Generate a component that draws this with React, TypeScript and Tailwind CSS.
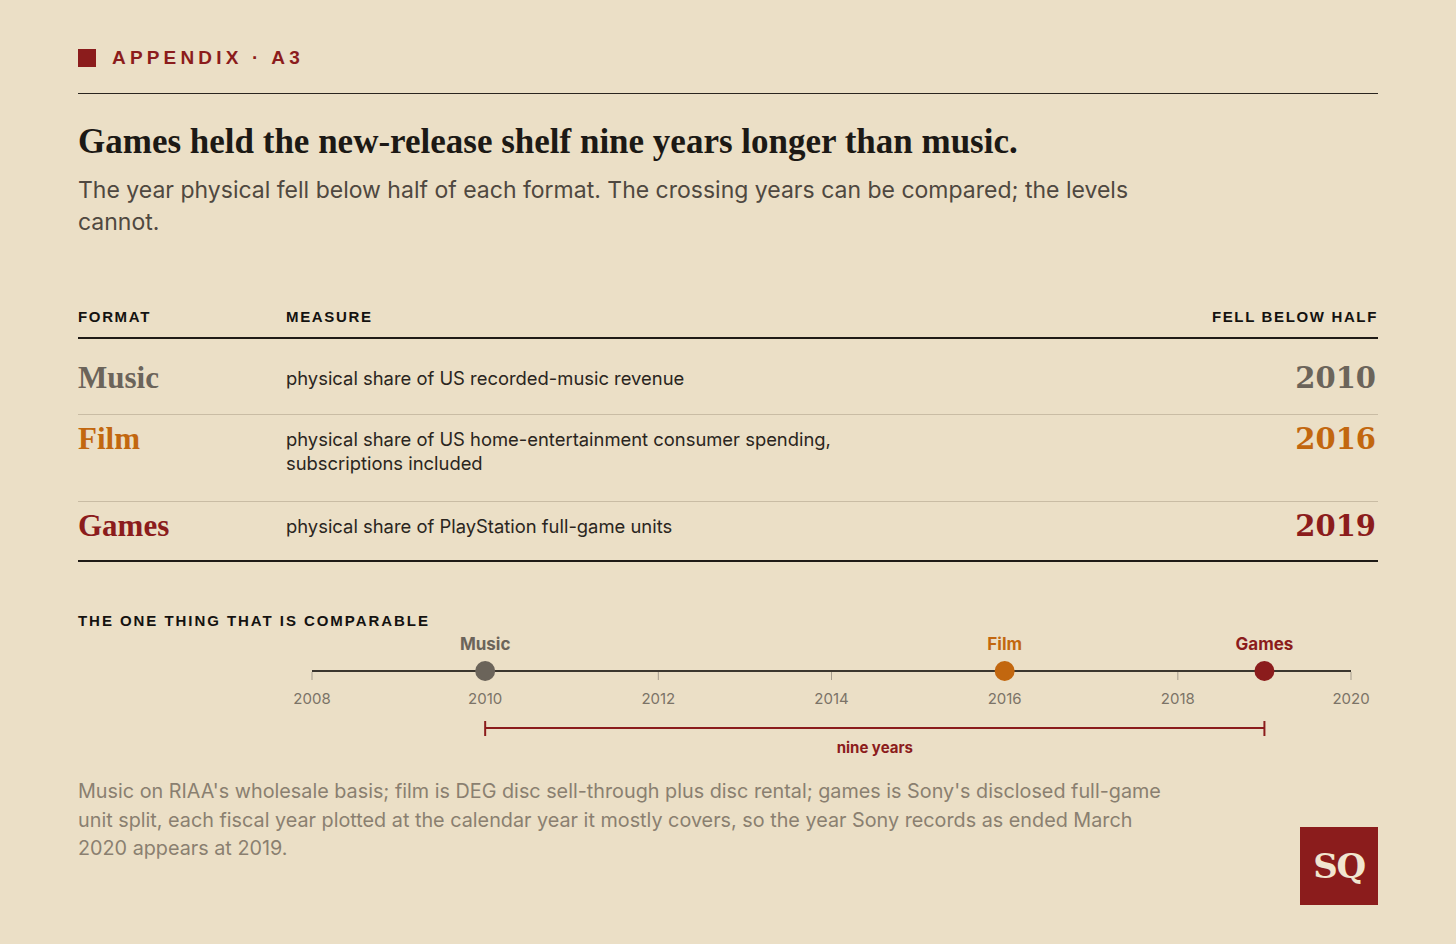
const rows = [
  {
    name: "Music",
    measure: ["physical share of US recorded-music revenue"],
    year: "2010",
    color: "text-[#6b645a]",
  },
  {
    name: "Film",
    measure: [
      "physical share of US home-entertainment consumer spending,",
      "subscriptions included",
    ],
    year: "2016",
    color: "text-[#c2670f]",
  },
  {
    name: "Games",
    measure: ["physical share of PlayStation full-game units"],
    year: "2019",
    color: "text-[#8b1c1c]",
  },
];

// x position on the axis, svg coords (axis 2008..2020)
const xOf = (yr: number) => 234 + ((yr - 2008) * 1039) / 12;

function Timeline() {
  const ticks = [2008, 2010, 2012, 2014, 2016, 2018, 2020];
  const points = [
    { label: "Music", yr: 2010, fill: "#6b645a" },
    { label: "Film", yr: 2016, fill: "#c2670f" },
    { label: "Games", yr: 2019, fill: "#8b1c1c" },
  ];
  return (
    <svg width="1300" height="130" viewBox="0 0 1300 130" className="block">
      <line x1={234} y1={41} x2={1273} y2={41} stroke="#3b362e" strokeWidth={2} />
      {ticks.map((t) => (
        <g key={t}>
          <line x1={xOf(t)} y1={42} x2={xOf(t)} y2={50} stroke="#a69d8e" strokeWidth={1} />
          <text x={xOf(t)} y={74} textAnchor="middle" fontSize={15} fill="#7b7367">
            {t}
          </text>
        </g>
      ))}
      {points.map((p) => (
        <g key={p.label}>
          <circle cx={xOf(p.yr)} cy={41} r={10} fill={p.fill} />
          <text
            x={xOf(p.yr)}
            y={20}
            textAnchor="middle"
            fontSize={17}
            fontWeight={700}
            fill={p.fill}
          >
            {p.label}
          </text>
        </g>
      ))}
      <line x1={xOf(2010)} y1={98} x2={xOf(2019)} y2={98} stroke="#8b1c1c" strokeWidth={2} />
      <line x1={xOf(2010)} y1={91} x2={xOf(2010)} y2={106} stroke="#8b1c1c" strokeWidth={2} />
      <line x1={xOf(2019)} y1={91} x2={xOf(2019)} y2={106} stroke="#8b1c1c" strokeWidth={2} />
      <text
        x={(xOf(2010) + xOf(2019)) / 2}
        y={123}
        textAnchor="middle"
        fontSize={15}
        fontWeight={700}
        fill="#8b1c1c"
      >
        nine years
      </text>
    </svg>
  );
}

export default function App() {
  return (
    <main className="min-h-[944px] w-full bg-[#ebdfc6] px-[78px] pt-[46px] font-['Inter','Liberation_Sans',Arial,sans-serif]">
      {/* eyebrow */}
      <div className="flex h-6 items-center gap-[16px] font-['Liberation_Sans',Arial,sans-serif]">
        <span className="block h-[18px] w-[18px] bg-[#8b1c1c]" />
        <span className="text-[19px] font-bold leading-6 tracking-[0.22em] text-[#8b1c1c]">
          APPENDIX · A3
        </span>
      </div>
      <div className="mt-[23px] h-px w-full bg-[#2a251f]" />

      <h1 className="mt-[28px] font-['Liberation_Serif',serif] text-[35px] font-bold leading-10 text-[#1c1915]">
        Games held the new-release shelf nine years longer than music.
      </h1>
      <p className="mt-[12px] text-[23px] leading-8 text-[#4f4840]">
        The year physical fell below half of each format. The crossing years can be compared; the levels
        <br />
        cannot.
      </p>

      {/* table */}
      <div className="mt-[69px]">
        <div className="grid grid-cols-[208px_1fr_auto] border-b-2 border-[#1f1b16] pb-[10px] font-['Liberation_Sans',Arial,sans-serif] text-[15px] font-bold leading-5 tracking-[0.11em] text-[#141210]">
          <span>FORMAT</span>
          <span>MEASURE</span>
          <span className="text-right">FELL BELOW HALF</span>
        </div>
        {rows.map((r, i) => (
          <div
            key={r.name}
            className={
              "grid grid-cols-[208px_1fr_auto] items-start " +
              (i === 0 ? "pt-[27px] pb-[24px] " : i === 1 ? "pt-[12px] pb-[26px] " : "pt-[12px] pb-[22px] ") +
              (i < rows.length - 1 ? "border-b border-[#c9bca4]" : "border-b-2 border-[#1f1b16]")
            }
          >
            <span className={"font-['Liberation_Serif',serif] text-[31px] font-bold leading-6 " + r.color}>
              {r.name}
            </span>
            <span className="text-[18.4px] leading-6 text-[#2a2520]">
              {r.measure.map((m, j) => (
                <span key={j} className="block">
                  {m}
                </span>
              ))}
            </span>
            <span className={"pr-[2px] font-['DejaVu_Serif',serif] text-[29px] font-bold leading-6 " + r.color}>
              {r.year}
            </span>
          </div>
        ))}
      </div>

      {/* timeline */}
      <div className="mt-[50px] font-['Liberation_Sans',Arial,sans-serif] text-[15px] font-bold leading-[18px] tracking-[0.13em] text-[#141210]">
        THE ONE THING THAT IS COMPARABLE
      </div>
      <Timeline />

      <div className="mt-[17px] flex items-start justify-between">
        <p className="text-[19.8px] leading-[28.5px] text-[#8a7f70]">
          Music on RIAA's wholesale basis; film is DEG disc sell-through plus disc rental; games is Sony's disclosed full-game
          <br />
          unit split, each fiscal year plotted at the calendar year it mostly covers, so the year Sony records as ended March
          <br />
          2020 appears at 2019.
        </p>
        <div className="mt-[50px] flex h-[78px] w-[78px] shrink-0 items-center justify-center bg-[#8b1c1c]">
          <span className="font-['DejaVu_Serif',serif] text-[34px] font-bold tracking-[-0.04em] text-[#f1e6d0]">
            SQ
          </span>
        </div>
      </div>
    </main>
  );
}
